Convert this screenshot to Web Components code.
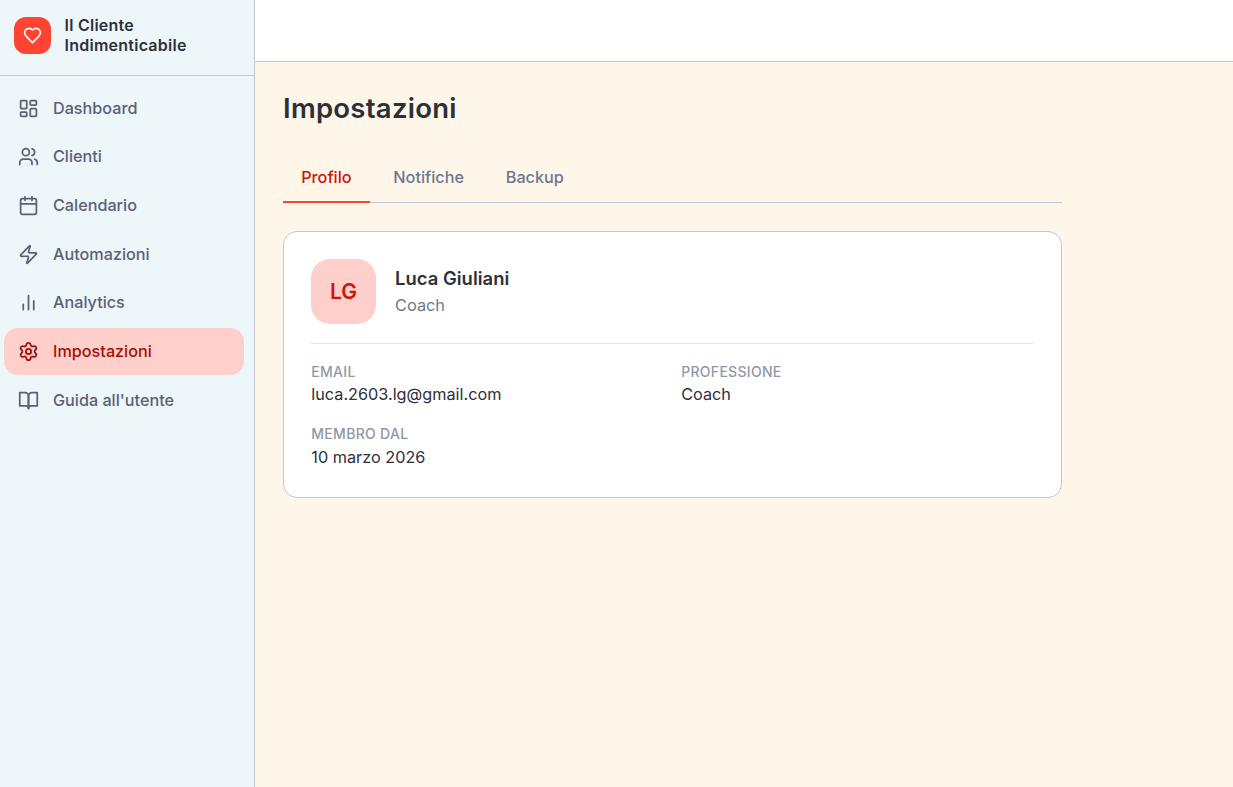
<!DOCTYPE html>
<html lang="it">
<head>
<meta charset="utf-8">
<title>Impostazioni</title>
<style>
html,body{margin:0;height:100%}
body{font-family:Inter,"Liberation Sans",sans-serif;font-size:16.33px;color:#2d3038;overflow:hidden}
</style>
</head>
<body>
<app-shell>
  <side-bar slot="side">
    <nav-item icon="dashboard">Dashboard</nav-item>
    <nav-item icon="users">Clienti</nav-item>
    <nav-item icon="calendar">Calendario</nav-item>
    <nav-item icon="zap">Automazioni</nav-item>
    <nav-item icon="chart">Analytics</nav-item>
    <nav-item icon="settings" active>Impostazioni</nav-item>
    <nav-item icon="book">Guida all'utente</nav-item>
  </side-bar>
  <page-title>Impostazioni</page-title>
  <tab-list>
    <tab-item active>Profilo</tab-item>
    <tab-item>Notifiche</tab-item>
    <tab-item>Backup</tab-item>
  </tab-list>
  <profile-card initials="LG">
    <span slot="name">Luca Giuliani</span>
    <span slot="role">Coach</span>
    <info-field label="EMAIL">luca.2603.lg@gmail.com</info-field>
    <info-field label="PROFESSIONE">Coach</info-field>
    <info-field label="MEMBRO DAL">10 marzo 2026</info-field>
  </profile-card>
</app-shell>
<script>
const ICONS = {
  heart: '<path d="M19 14c1.49-1.46 3-3.21 3-5.5A5.5 5.5 0 0 0 16.5 3c-1.76 0-3 .5-4.5 2-1.5-1.5-2.74-2-4.5-2A5.5 5.5 0 0 0 2 8.5c0 2.3 1.5 4.05 3 5.5l7 7Z"/>',
  dashboard: '<rect x="3" y="3" width="7" height="9" rx="1"/><rect x="14" y="3" width="7" height="5" rx="1"/><rect x="14" y="12" width="7" height="9" rx="1"/><rect x="3" y="16" width="7" height="5" rx="1"/>',
  users: '<path d="M16 21v-2a4 4 0 0 0-4-4H6a4 4 0 0 0-4 4v2"/><circle cx="9" cy="7" r="4"/><path d="M22 21v-2a4 4 0 0 0-3-3.87"/><path d="M16 3.13a4 4 0 0 1 0 7.75"/>',
  calendar: '<path d="M8 2v4M16 2v4M3 10h18"/><rect x="3" y="4" width="18" height="18" rx="2"/>',
  zap: '<path d="M4 14a1 1 0 0 1-.78-1.63l9.9-10.2a.5.5 0 0 1 .86.46l-1.92 6.02A1 1 0 0 0 13 10h7a1 1 0 0 1 .78 1.63l-9.9 10.2a.5.5 0 0 1-.86-.46l1.92-6.02A1 1 0 0 0 11 14z"/>',
  chart: '<path d="M6 20v-6M12 20V4M18 20V10"/>',
  settings: '<path d="M9.671 4.136a2.34 2.34 0 0 1 4.659 0 2.34 2.34 0 0 0 3.319 1.915 2.34 2.34 0 0 1 2.33 4.033 2.34 2.34 0 0 0 0 3.831 2.34 2.34 0 0 1-2.33 4.033 2.34 2.34 0 0 0-3.319 1.915 2.34 2.34 0 0 1-4.659 0 2.34 2.34 0 0 0-3.32-1.915 2.34 2.34 0 0 1-2.33-4.033 2.34 2.34 0 0 0 0-3.831A2.34 2.34 0 0 1 6.35 6.051a2.34 2.34 0 0 0 3.319-1.915"/><circle cx="12" cy="12" r="3"/>',
  book: '<path d="M2 3h6a4 4 0 0 1 4 4v14a3 3 0 0 0-3-3H2z"/><path d="M22 3h-6a4 4 0 0 0-4 4v14a3 3 0 0 1 3-3h7z"/>'
};
const icon = n => `<svg viewBox="0 0 24 24" fill="none" stroke="currentColor" stroke-width="2" stroke-linecap="round" stroke-linejoin="round" aria-hidden="true">${ICONS[n]}</svg>`;
const define = (name, render) => customElements.define(name, class extends HTMLElement {
  constructor(){ super(); this.attachShadow({mode:'open'}); }
  connectedCallback(){ this.shadowRoot.innerHTML = render(this); }
});

define('app-shell', () => `<style>
  :host{display:grid;grid-template-columns:255px 1fr;height:100vh}
  .right{display:flex;flex-direction:column;background:#fef6e8}
  header{height:61px;background:#fff;border-bottom:1px solid #c3c7d1;flex:none}
  main{width:779px;padding:28px 28px 0}
</style><slot name="side"></slot><div class="right"><header></header><main><slot></slot></main></div>`);

define('side-bar', () => `<style>
  :host{display:flex;flex-direction:column;box-sizing:border-box;background:#edf6f9;border-right:1px solid #c3c7d1}
  .brand{display:flex;align-items:flex-start;gap:13.5px;height:75px;box-sizing:content-box;border-bottom:1px solid #c3c7d1;padding-left:14px}
  .logo{width:37px;height:37px;margin-top:17px;border-radius:12px;background:#ff4433;color:#fff;display:grid;place-items:center}
  .logo svg{width:19px;height:19px;display:block}
  .name{margin-top:15px;font-size:16px;font-weight:560;line-height:20px;letter-spacing:.25px}
  nav{display:flex;flex-direction:column;gap:2px;padding:8.67px 10px 0 4px}
</style><div class="brand"><div class="logo">${icon('heart')}</div><div class="name">Il Cliente<br>Indimenticabile</div></div><nav><slot></slot></nav>`);

define('nav-item', el => `<style>
  :host{display:flex;align-items:center;gap:14px;height:46.67px;box-sizing:border-box;padding:0 14px;border-radius:14px;color:#5e6078;font-weight:500;font-size:16.2px;line-height:23.33px}
  :host([active]){background:#ffcfcb;color:#a31106}
  svg{width:21px;height:21px;display:block;flex:none;margin-top:.3px}
  span{margin-top:.67px}
</style>${icon(el.getAttribute('icon'))}<span><slot></slot></span>`);

define('page-title', () => `<style>
  :host{display:block}
  h1{margin:0;font-size:27.5px;line-height:37px;padding-bottom:1px;font-weight:620;letter-spacing:.27px}
</style><h1><slot></slot></h1>`);

define('tab-list', () => `<style>
  :host{display:flex;gap:5.3px;height:49px;margin-top:25px;border-bottom:1px solid #c3c7d1}
</style><slot></slot>`);

define('tab-item', () => `<style>
  :host{display:flex;align-items:center;justify-content:center;padding:0 18.2px;height:48px;margin-bottom:-1px;border-bottom:2px solid transparent;color:#6d788e;font-size:16.25px;font-weight:500}
  :host([active]){color:#cb1708;border-color:#ff4433}
</style><span><slot></slot></span>`);

define('profile-card', el => `<style>
  :host{display:block;box-sizing:border-box;height:267px;margin-top:28px;padding:27px 28px 27px 27px;background:#fff;border:1px solid #c3c7d1;border-radius:14px}
  .top{display:flex;gap:19px;padding-bottom:19px;border-bottom:1px solid #e1e3e7}
  .avatar{width:65px;height:65px;border-radius:19px;background:#ffcfcb;color:#cb1708;display:grid;place-items:center;font-size:21px;font-weight:600}
  .name{margin-top:5px;font-size:18.4px;line-height:28px;font-weight:570;letter-spacing:.04px}
  .role{margin-top:1px;font-size:16.33px;line-height:25px;color:#6d788e}
  .grid{display:grid;grid-template-columns:1fr 1fr;column-gap:18px;row-gap:16.6px;margin-top:17px;padding-left:.3px}
</style><div class="top"><div class="avatar">${el.getAttribute('initials')}</div><div><div class="name"><slot name="name"></slot></div><div class="role"><slot name="role"></slot></div></div></div><div class="grid"><slot></slot></div>`);

define('info-field', el => `<style>
  :host{display:block}
  .l{font-size:14px;line-height:22px;padding-bottom:.4px;font-weight:500;letter-spacing:.3px;color:#8f98a6}
  .v{font-size:16.25px;line-height:23.33px}
</style><div class="l">${el.getAttribute('label')}</div><div class="v"><slot></slot></div>`);
</script>
</body>
</html>
